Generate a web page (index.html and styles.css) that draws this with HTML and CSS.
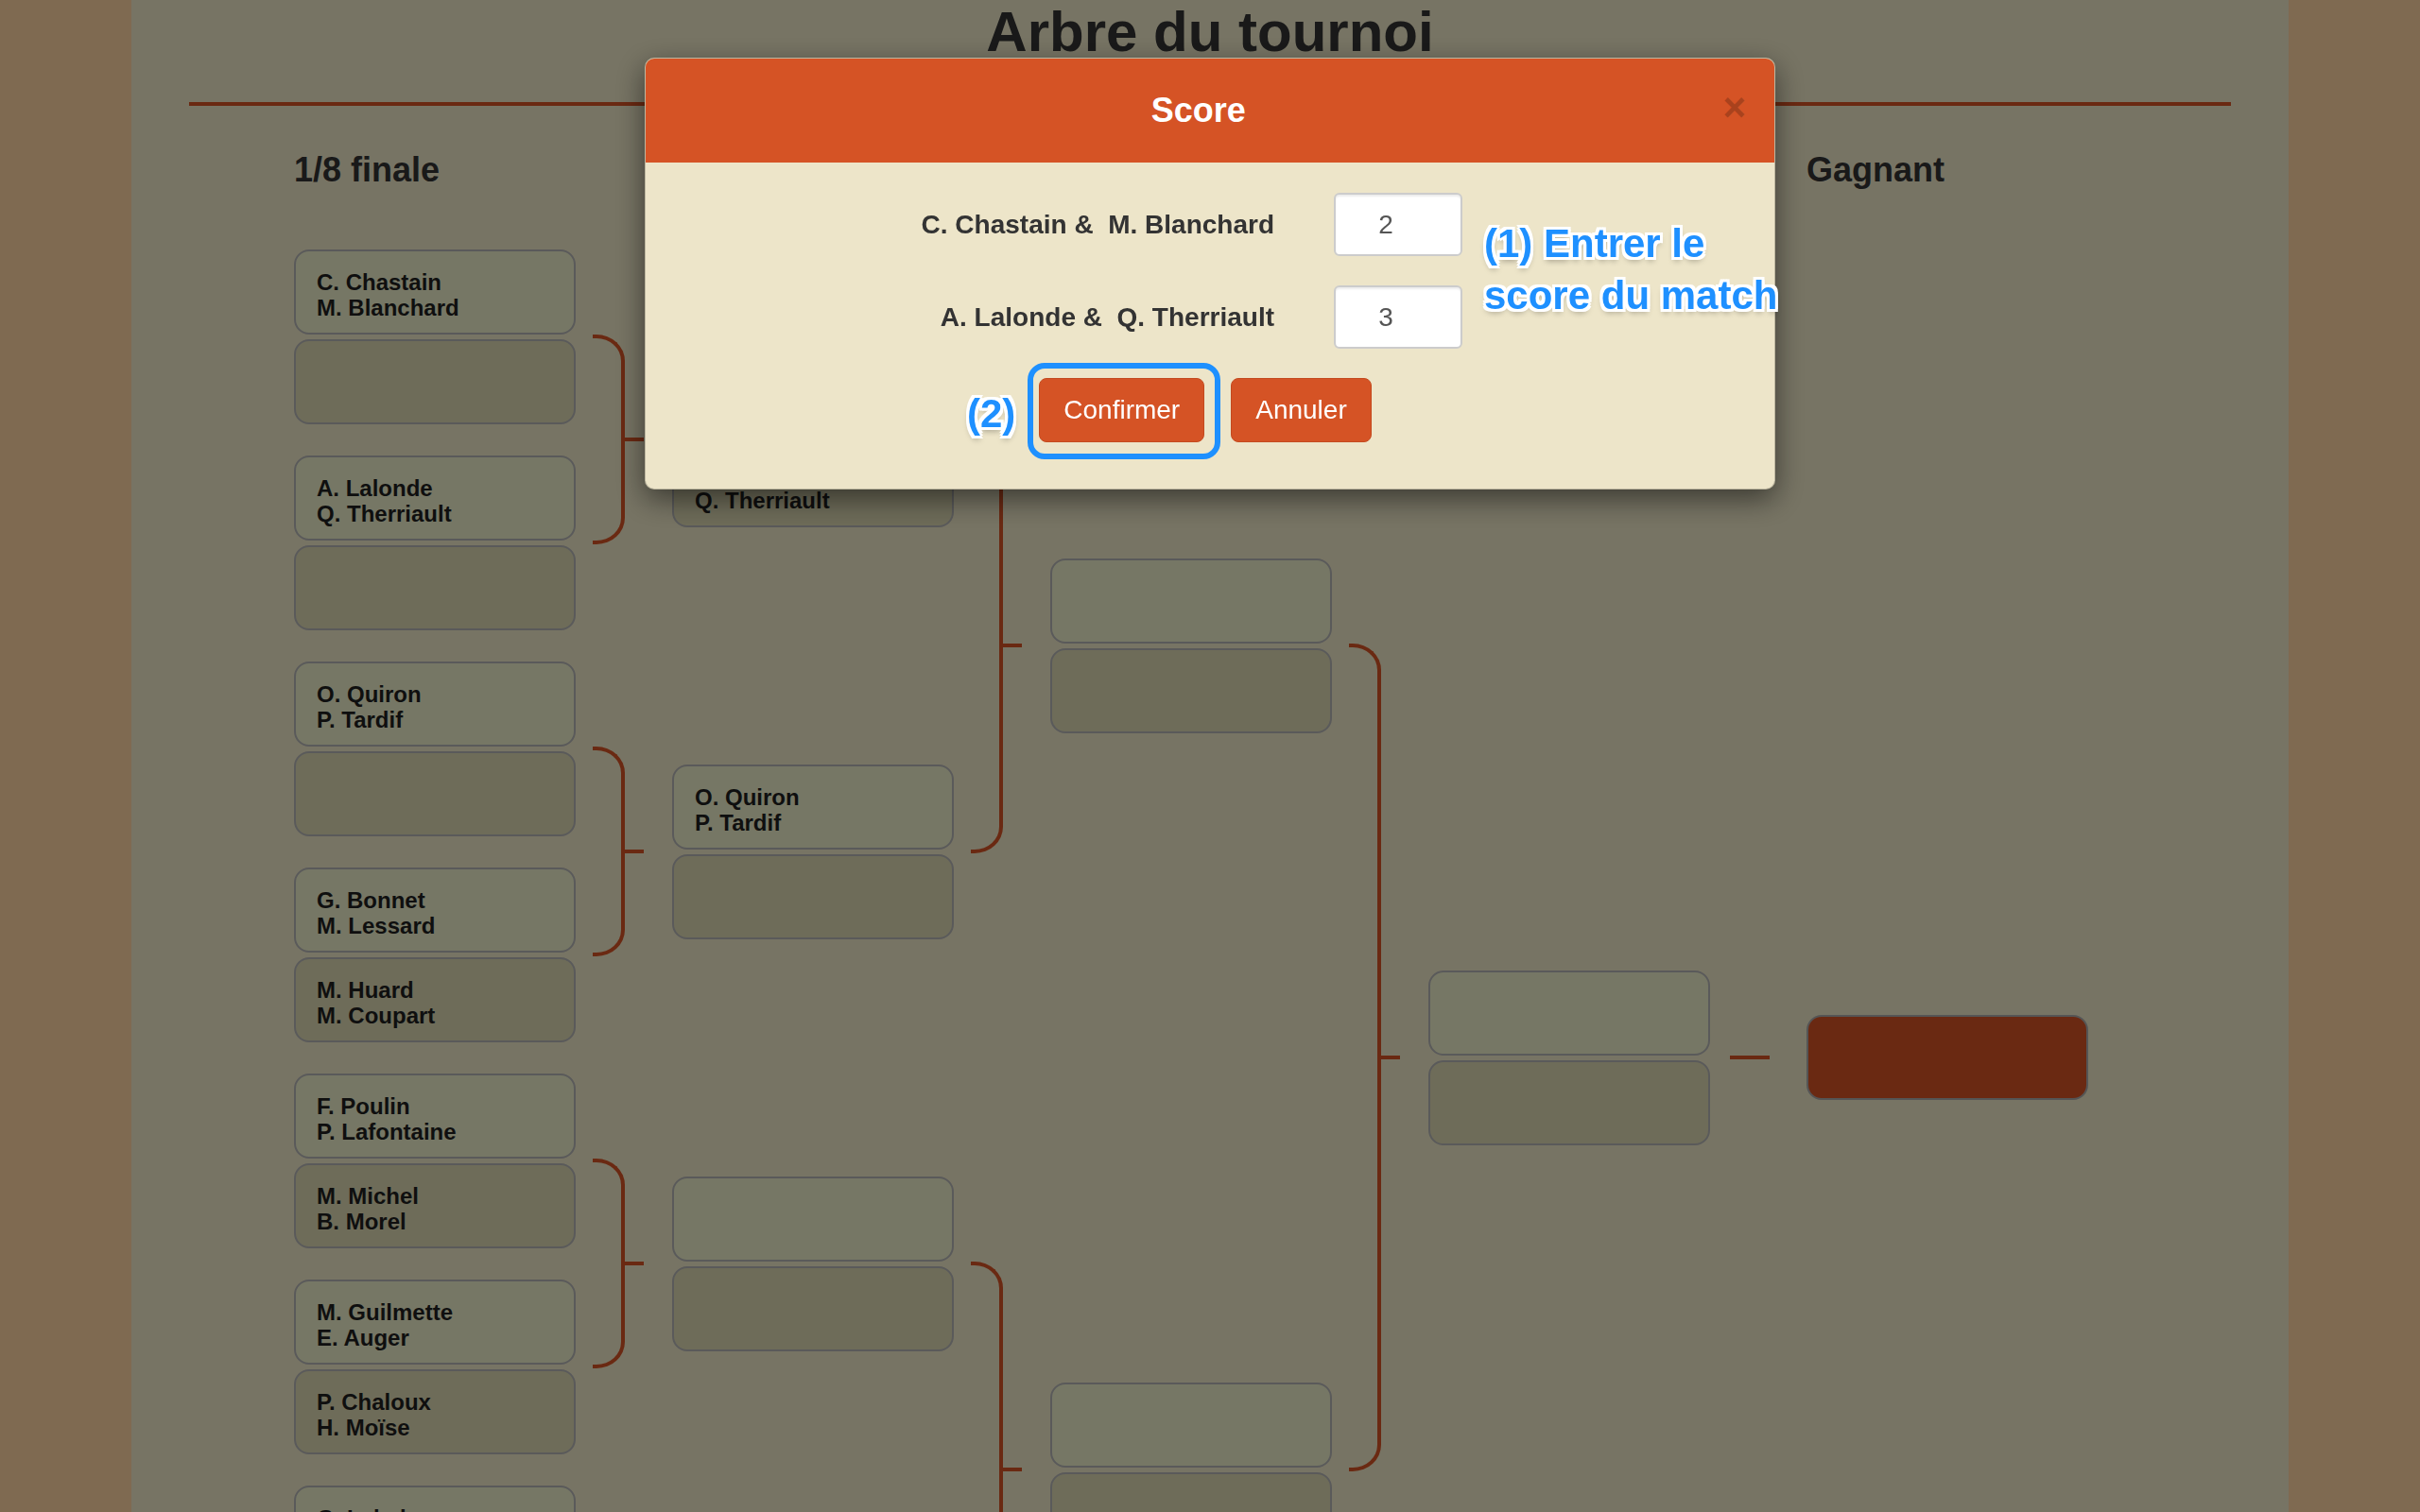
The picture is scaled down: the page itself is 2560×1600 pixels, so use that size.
FILE: index.html
```html
<!DOCTYPE html>
<html lang="fr">
<head>
<meta charset="utf-8">
<title>Arbre du tournoi</title>
<link rel="stylesheet" href="styles.css">
</head>
<body class="modal-open">
<div class="page">
  <h1 class="title">Arbre du tournoi</h1>
  <div class="rule"></div>

  <div class="heads">
    <h2>1/8 finale</h2>
    <h2>1/4 finale</h2>
    <h2>1/2 finale</h2>
    <h2>Finale</h2>
    <h2>Gagnant</h2>
  </div>

  <div class="rounds">
    <div class="round">
      <div class="match"><div class="team">C. Chastain<br>M. Blanchard</div><div class="team alt"></div></div>
      <div class="match"><div class="team">A. Lalonde<br>Q. Therriault</div><div class="team alt"></div></div>
      <div class="match"><div class="team">O. Quiron<br>P. Tardif</div><div class="team alt"></div></div>
      <div class="match"><div class="team">G. Bonnet<br>M. Lessard</div><div class="team alt">M. Huard<br>M. Coupart</div></div>
      <div class="match"><div class="team">F. Poulin<br>P. Lafontaine</div><div class="team alt">M. Michel<br>B. Morel</div></div>
      <div class="match"><div class="team">M. Guilmette<br>E. Auger</div><div class="team alt">P. Chaloux<br>H. Moïse</div></div>
      <div class="match"><div class="team">G. Lebel<br>S. Roy</div><div class="team alt">J. Gagnon<br>L. Côté</div></div>
      <div class="match"><div class="team">R. Pelletier<br>D. Girard</div><div class="team alt"></div></div>
    </div>
    <div class="conn c1">
      <div class="brace"></div><div class="brace"></div><div class="brace"></div><div class="brace"></div>
    </div>
    <div class="round">
      <div class="match"><div class="team">C. Chastain<br>M. Blanchard</div><div class="team alt">A. Lalonde<br>Q. Therriault</div></div>
      <div class="match"><div class="team">O. Quiron<br>P. Tardif</div><div class="team alt"></div></div>
      <div class="match"><div class="team"></div><div class="team alt"></div></div>
      <div class="match"><div class="team"></div><div class="team alt"></div></div>
    </div>
    <div class="conn c2">
      <div class="brace"></div><div class="brace"></div>
    </div>
    <div class="round">
      <div class="match"><div class="team"></div><div class="team alt"></div></div>
      <div class="match"><div class="team"></div><div class="team alt"></div></div>
    </div>
    <div class="conn c3">
      <div class="brace"></div>
    </div>
    <div class="round">
      <div class="match"><div class="team"></div><div class="team alt"></div></div>
    </div>
    <div class="conn c4">
      <div class="dash"></div>
    </div>
    <div class="round">
      <div class="team win"></div>
    </div>
  </div>
</div>

<div class="backdrop"></div>

<div class="modal" role="dialog">
  <div class="modal-head">
    <h3 class="modal-title">Score</h3>
    <button class="close" type="button">×</button>
  </div>
  <div class="modal-body">
    <div class="field">
      <label>C. Chastain &amp;&nbsp; M. Blanchard</label>
      <input type="text" value="2">
    </div>
    <div class="field">
      <label>A. Lalonde &amp;&nbsp; Q. Therriault</label>
      <input type="text" value="3">
    </div>
    <div class="actions">
      <button class="btn" type="button">Confirmer</button>
      <button class="btn" type="button">Annuler</button>
    </div>

    <div class="note note1">(1) Entrer le<br>score du match</div>
    <div class="note note2">(2)</div>
    <div class="ring"></div>
  </div>
</div>
</body>
</html>
```

FILE: styles.css
```css
html, body {
  height: 100%;
}

body {
  margin: 0;
  background: #fed5a2;
  font-family: "Liberation Sans", Arial, Helvetica, sans-serif;
  color: #333;
}

body.modal-open {
  overflow: hidden;
}

.page {
  width: 2282px;
  height: 100%;
  margin: 0 auto;
  background: #eee8c8;
}

.title {
  margin: 0;
  padding-top: 4px;
  font-size: 60px;
  line-height: 60px;
  font-weight: bold;
  text-align: center;
  color: #333;
}

.rule {
  height: 4px;
  margin: 44px 61px 0;
  background: #d55325;
}

.heads {
  display: grid;
  grid-template-columns: repeat(5, 298px);
  column-gap: 102px;
  margin: 50px 0 0 172px;
}

.heads h2 {
  margin: 0;
  font-size: 36px;
  line-height: 36px;
  font-weight: bold;
  color: #333;
  white-space: nowrap;
}

.rounds {
  display: grid;
  grid-template-columns: 298px 102px 298px 102px 298px 102px 298px 102px 298px;
  height: 1744px;
  margin: 49px 0 0 172px;
}

.round,
.conn {
  display: flex;
  flex-direction: column;
  justify-content: space-around;
}

.match {
  display: flex;
  flex-direction: column;
  gap: 5px;
}

.team {
  box-sizing: border-box;
  height: 90px;
  padding: 19px 0 0 22px;
  border: 2px solid #b5b5b5;
  border-radius: 16px;
  background: #eceeca;
  font-size: 24px;
  line-height: 27px;
  font-weight: bold;
  color: #1e1e1e;
}

.team.alt {
  background: #dcd8b2;
}

.team.win {
  background: #d55325;
  border-color: #aaaaaa;
}

.brace {
  box-sizing: border-box;
  position: relative;
  width: 34px;
  margin-left: 18px;
  border: 4px solid #d55325;
  border-left: 0;
  border-radius: 0 30px 30px 0 / 0 28px 28px 0;
}

.brace::after {
  content: "";
  position: absolute;
  left: 100%;
  top: 50%;
  width: 24px;
  height: 4px;
  margin-top: -2px;
  background: #d55325;
}

.c1 .brace { height: 222px; }
.c2 .brace { height: 440px; }
.c3 .brace { height: 876px; }

.dash {
  width: 42px;
  height: 4px;
  margin-left: 21px;
  background: #d55325;
}

.backdrop {
  position: fixed;
  inset: 0;
  background: rgba(0, 0, 0, 0.5);
}

.modal {
  position: fixed;
  top: 61px;
  left: 0;
  right: 0;
  box-sizing: border-box;
  width: 1196px;
  margin: 0 auto;
  background: #ede5c9;
  border: 1px solid rgba(0, 0, 0, 0.2);
  border-radius: 10px;
  box-shadow: 0 10px 30px rgba(0, 0, 0, 0.5);
}

.modal-head {
  display: flex;
  align-items: center;
  height: 110px;
  padding: 0 30px;
  background: #d55325;
  border-radius: 9px 9px 0 0;
}

.modal-title {
  flex: 1;
  margin: 0;
  font-size: 36px;
  line-height: 36px;
  font-weight: bold;
  color: #fff;
  text-align: center;
}

.close {
  margin-top: -6px;
  padding: 0;
  border: 0;
  background: none;
  font-family: inherit;
  font-size: 42px;
  line-height: 42px;
  font-weight: bold;
  color: #000;
  opacity: 0.2;
}

.modal-body {
  position: relative;
  padding: 32px 0 49px;
}

.field {
  display: flex;
  align-items: center;
  height: 67px;
}

.field + .field {
  margin-top: 31px;
}

.field label {
  width: 665px;
  text-align: right;
  font-size: 28px;
  font-weight: bold;
  color: #333;
  white-space: nowrap;
}

.field input {
  box-sizing: border-box;
  width: 136px;
  height: 67px;
  margin-left: 63px;
  padding: 0 26px 0 0;
  border: 2px solid #cccccc;
  border-radius: 6px;
  background: #fff;
  box-shadow: inset 0 2px 2px rgba(0, 0, 0, 0.075);
  font-family: inherit;
  font-size: 28px;
  color: #555;
  text-align: center;
}

.actions {
  display: flex;
  justify-content: center;
  gap: 28px;
  margin-top: 31px;
  padding-right: 10px;
}

.btn {
  height: 68px;
  padding: 0 25px;
  border: 1px solid #c44a1f;
  border-radius: 8px;
  background: #d55325;
  color: #fff;
  font-family: inherit;
  font-size: 28px;
}

.note {
  position: absolute;
  font-size: 42px;
  line-height: 55px;
  font-weight: bold;
  color: #1e90ff;
  white-space: nowrap;
  text-shadow:
    -3px -3px 0 #fff, 3px -3px 0 #fff, -3px 3px 0 #fff, 3px 3px 0 #fff,
    0 -3px 0 #fff, 0 3px 0 #fff, -3px 0 0 #fff, 3px 0 0 #fff,
    0 4px 6px rgba(0, 0, 0, 0.35);
}

.note1 {
  left: 887px;
  top: 58px;
}

.note2 {
  left: 340px;
  top: 238px;
}

.ring {
  position: absolute;
  left: 404px;
  top: 212px;
  box-sizing: border-box;
  width: 204px;
  height: 102px;
  border: 6px solid #1e90ff;
  border-radius: 18px;
}
```
